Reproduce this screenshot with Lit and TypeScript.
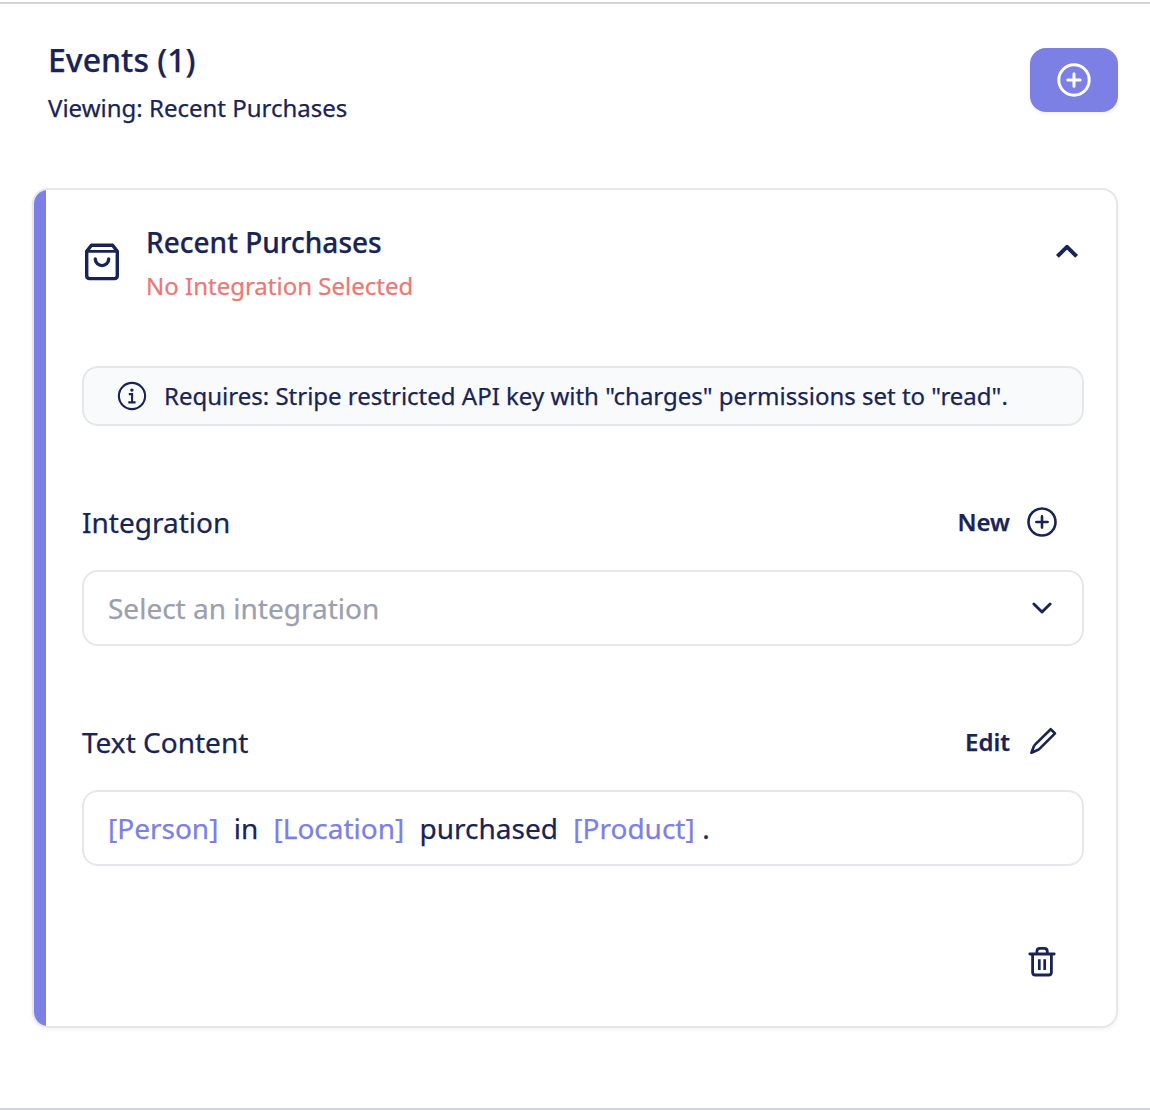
import { LitElement, html, css } from "lit";
import { customElement } from "lit/decorators.js";

const plusCircle = (size: number, radius: number, arm: number, stroke: number) => {
  const c = size / 2;
  return html`<svg width=${size} height=${size} viewBox="0 0 ${size} ${size}" fill="none" stroke="currentColor" stroke-width=${stroke} stroke-linecap="round">
    <circle cx=${c} cy=${c} r=${radius}></circle>
    <path d="M${c} ${c - arm}V${c + arm}M${c - arm} ${c}H${c + arm}"></path>
  </svg>`;
};

const bagIcon = html`<svg width="36" height="40" viewBox="0 0 36 40" fill="none" stroke="currentColor" stroke-width="3.4" stroke-linecap="round" stroke-linejoin="round">
  <path d="M2.7 10.4V34.6Q2.7 37.6 5.7 37.6H30.3Q33.3 37.6 33.3 34.6V10.4L28.6 4.2H7.4Z"></path>
  <path stroke-width="2.8" d="M3 10.4H33"></path>
  <path d="M11.3 17.9a6.7 6.7 0 0 0 13.4 0"></path>
</svg>`;

const chevronUp = html`<svg width="24" height="16" viewBox="0 0 24 16" fill="none" stroke="currentColor" stroke-width="4" stroke-linejoin="round"><path d="M2.4 13.4L12 3.8L21.6 13.4"></path></svg>`;

const chevronDown = html`<svg width="20" height="12" viewBox="0 0 20 12" fill="none" stroke="currentColor" stroke-width="2.9" stroke-linecap="round" stroke-linejoin="round"><path d="M1.9 2L10 10L18.1 2"></path></svg>`;

const infoIcon = html`<svg width="30" height="30" viewBox="0 0 30 30" fill="none" stroke="currentColor" stroke-width="2.1">
  <circle cx="15" cy="15" r="13.1"></circle>
  <path d="M11.8 13.1H15.1V21.4M11.3 21.4H18.6"></path>
  <circle cx="14.9" cy="9.1" r="1.7" fill="currentColor" stroke="none"></circle>
</svg>`;

const pencilIcon = html`<svg width="28" height="28" viewBox="0 0 28 28" fill="none" stroke="currentColor" stroke-width="2.6" stroke-linejoin="round">
  <path d="M21.7 2.2L26 6.4L10.7 21.7Q9.6 22.8 8.1 23.3L2.4 25.7L4.6 20.1Q5.1 18.5 6.3 17.4Z"></path>
  <path d="M1.6 26.6L3.3 22.2L6.2 25Z" fill="currentColor" stroke="none"></path>
</svg>`;

const trashIcon = html`<svg width="28" height="32" viewBox="0 0 28 32" fill="none" stroke="currentColor" stroke-width="2.8" stroke-linecap="round" stroke-linejoin="round">
  <path d="M1.8 9H26.2M4.6 9V27.2Q4.6 30 7.4 30H20.6Q23.4 30 23.4 27.2V9"></path>
  <path d="M8.9 8.6V6.4Q8.9 3.4 11.9 3.4H16.3Q19.3 3.4 19.3 6.4V8.6"></path>
  <path stroke-linecap="butt" stroke-width="2.7" d="M11.3 14.2V25M16.7 14.2V25"></path>
</svg>`;

@customElement("app-root")
export class AppRoot extends LitElement {
  static styles = css`
    :host { display: block; font-family: "Noto Sans", sans-serif; color: #1a2454; }
    * { box-sizing: border-box; }
    svg { display: block; flex: none; }
    .frame { height: 1110px; padding-top: 2px; background: #fff; }
    .page { height: 1108px; border-top: 2px solid #d1d5db; border-bottom: 2px solid #d1d5db; padding: 34px 32px 0; -webkit-text-stroke: 0.25px currentColor; }
    .header { display: flex; justify-content: space-between; height: 150px; padding: 0 0 0 16px; }
    .title { font-size: 32px; line-height: 44px; font-weight: 500; }
    .sub { font-size: 24px; line-height: 32px; margin-top: 10px; }
    .add { width: 88px; height: 64px; margin-top: 10px; border: 0; border-radius: 16px; background: #7c80e4; color: #fff; display: flex; align-items: center; justify-content: center; padding: 0; box-shadow: 0 2px 4px rgba(0, 0, 0, 0.06); }
    .card { height: 840px; border: 2px solid #e5e7eb; border-radius: 16px; overflow: hidden; display: flex; box-shadow: 0 2px 4px rgba(0, 0, 0, 0.05); }
    .stripe { width: 12px; background: #7c80e4; }
    .body { flex: 1; padding: 0 32px 0 36px; }
    .top { display: flex; height: 176px; padding: 32px 5px 0 2px; }
    .bag { margin: 19px 26px 0 0; }
    .names { flex: 1; }
    .name { font-size: 28px; line-height: 40px; font-weight: 500; }
    .warn { font-size: 24px; line-height: 32px; color: #e97a75; margin-top: 8px; }
    .collapse { margin-top: 21px; }
    .box { height: 76px; border: 2px solid #e5e7eb; border-radius: 16px; display: flex; align-items: center; padding: 0 30px 0 24px; font-size: 28px; }
    .note { height: 60px; background: #f8fafc; font-size: 24px; line-height: 32px; padding: 0 32px 0 33px; gap: 17px; }
    .row { display: flex; align-items: center; justify-content: space-between; height: 48px; margin: 72px 0 24px; padding-right: 26px; font-size: 28px; }
    .action { display: flex; align-items: center; font-size: 24px; line-height: 32px; font-weight: 600; gap: 16px; }
    .edit { gap: 19px; padding-right: 1px; }
    .edit svg { margin-bottom: 2px; }
    .placeholder { color: #9ca0ad; flex: 1; }
    .tag { color: #7c80e4; }
    .tag + .word { margin: 0 15.3px; }
    .tag + .stop { margin-left: 7.7px; }
    .tools { display: flex; justify-content: flex-end; padding: 79px 28px 0 0; }
  `;

  render() {
    return html`<div class="frame"><div class="page">
      <div class="header">
        <div><div class="title">Events (1)</div><div class="sub">Viewing: Recent Purchases</div></div>
        <button class="add">${plusCircle(36, 15.2, 6.2, 3)}</button>
      </div>
      <div class="card">
        <div class="stripe"></div>
        <div class="body">
          <div class="top">
            <div class="bag">${bagIcon}</div>
            <div class="names"><div class="name">Recent Purchases</div><div class="warn">No Integration Selected</div></div>
            <div class="collapse">${chevronUp}</div>
          </div>
          <div class="box note">${infoIcon}<span>Requires: Stripe restricted API key with "charges" permissions set to "read".</span></div>
          <div class="row"><span>Integration</span><span class="action"><span>New</span>${plusCircle(32, 13.5, 5.6, 2.6)}</span></div>
          <div class="box"><span class="placeholder">Select an integration</span>${chevronDown}</div>
          <div class="row"><span>Text Content</span><span class="action edit"><span>Edit</span>${pencilIcon}</span></div>
          <div class="box"><span class="tag">[Person]</span><span class="word">in</span><span class="tag">[Location]</span><span class="word">purchased</span><span class="tag">[Product]</span><span class="stop">.</span></div>
          <div class="tools">${trashIcon}</div>
        </div>
      </div>
    </div></div>`;
  }
}
